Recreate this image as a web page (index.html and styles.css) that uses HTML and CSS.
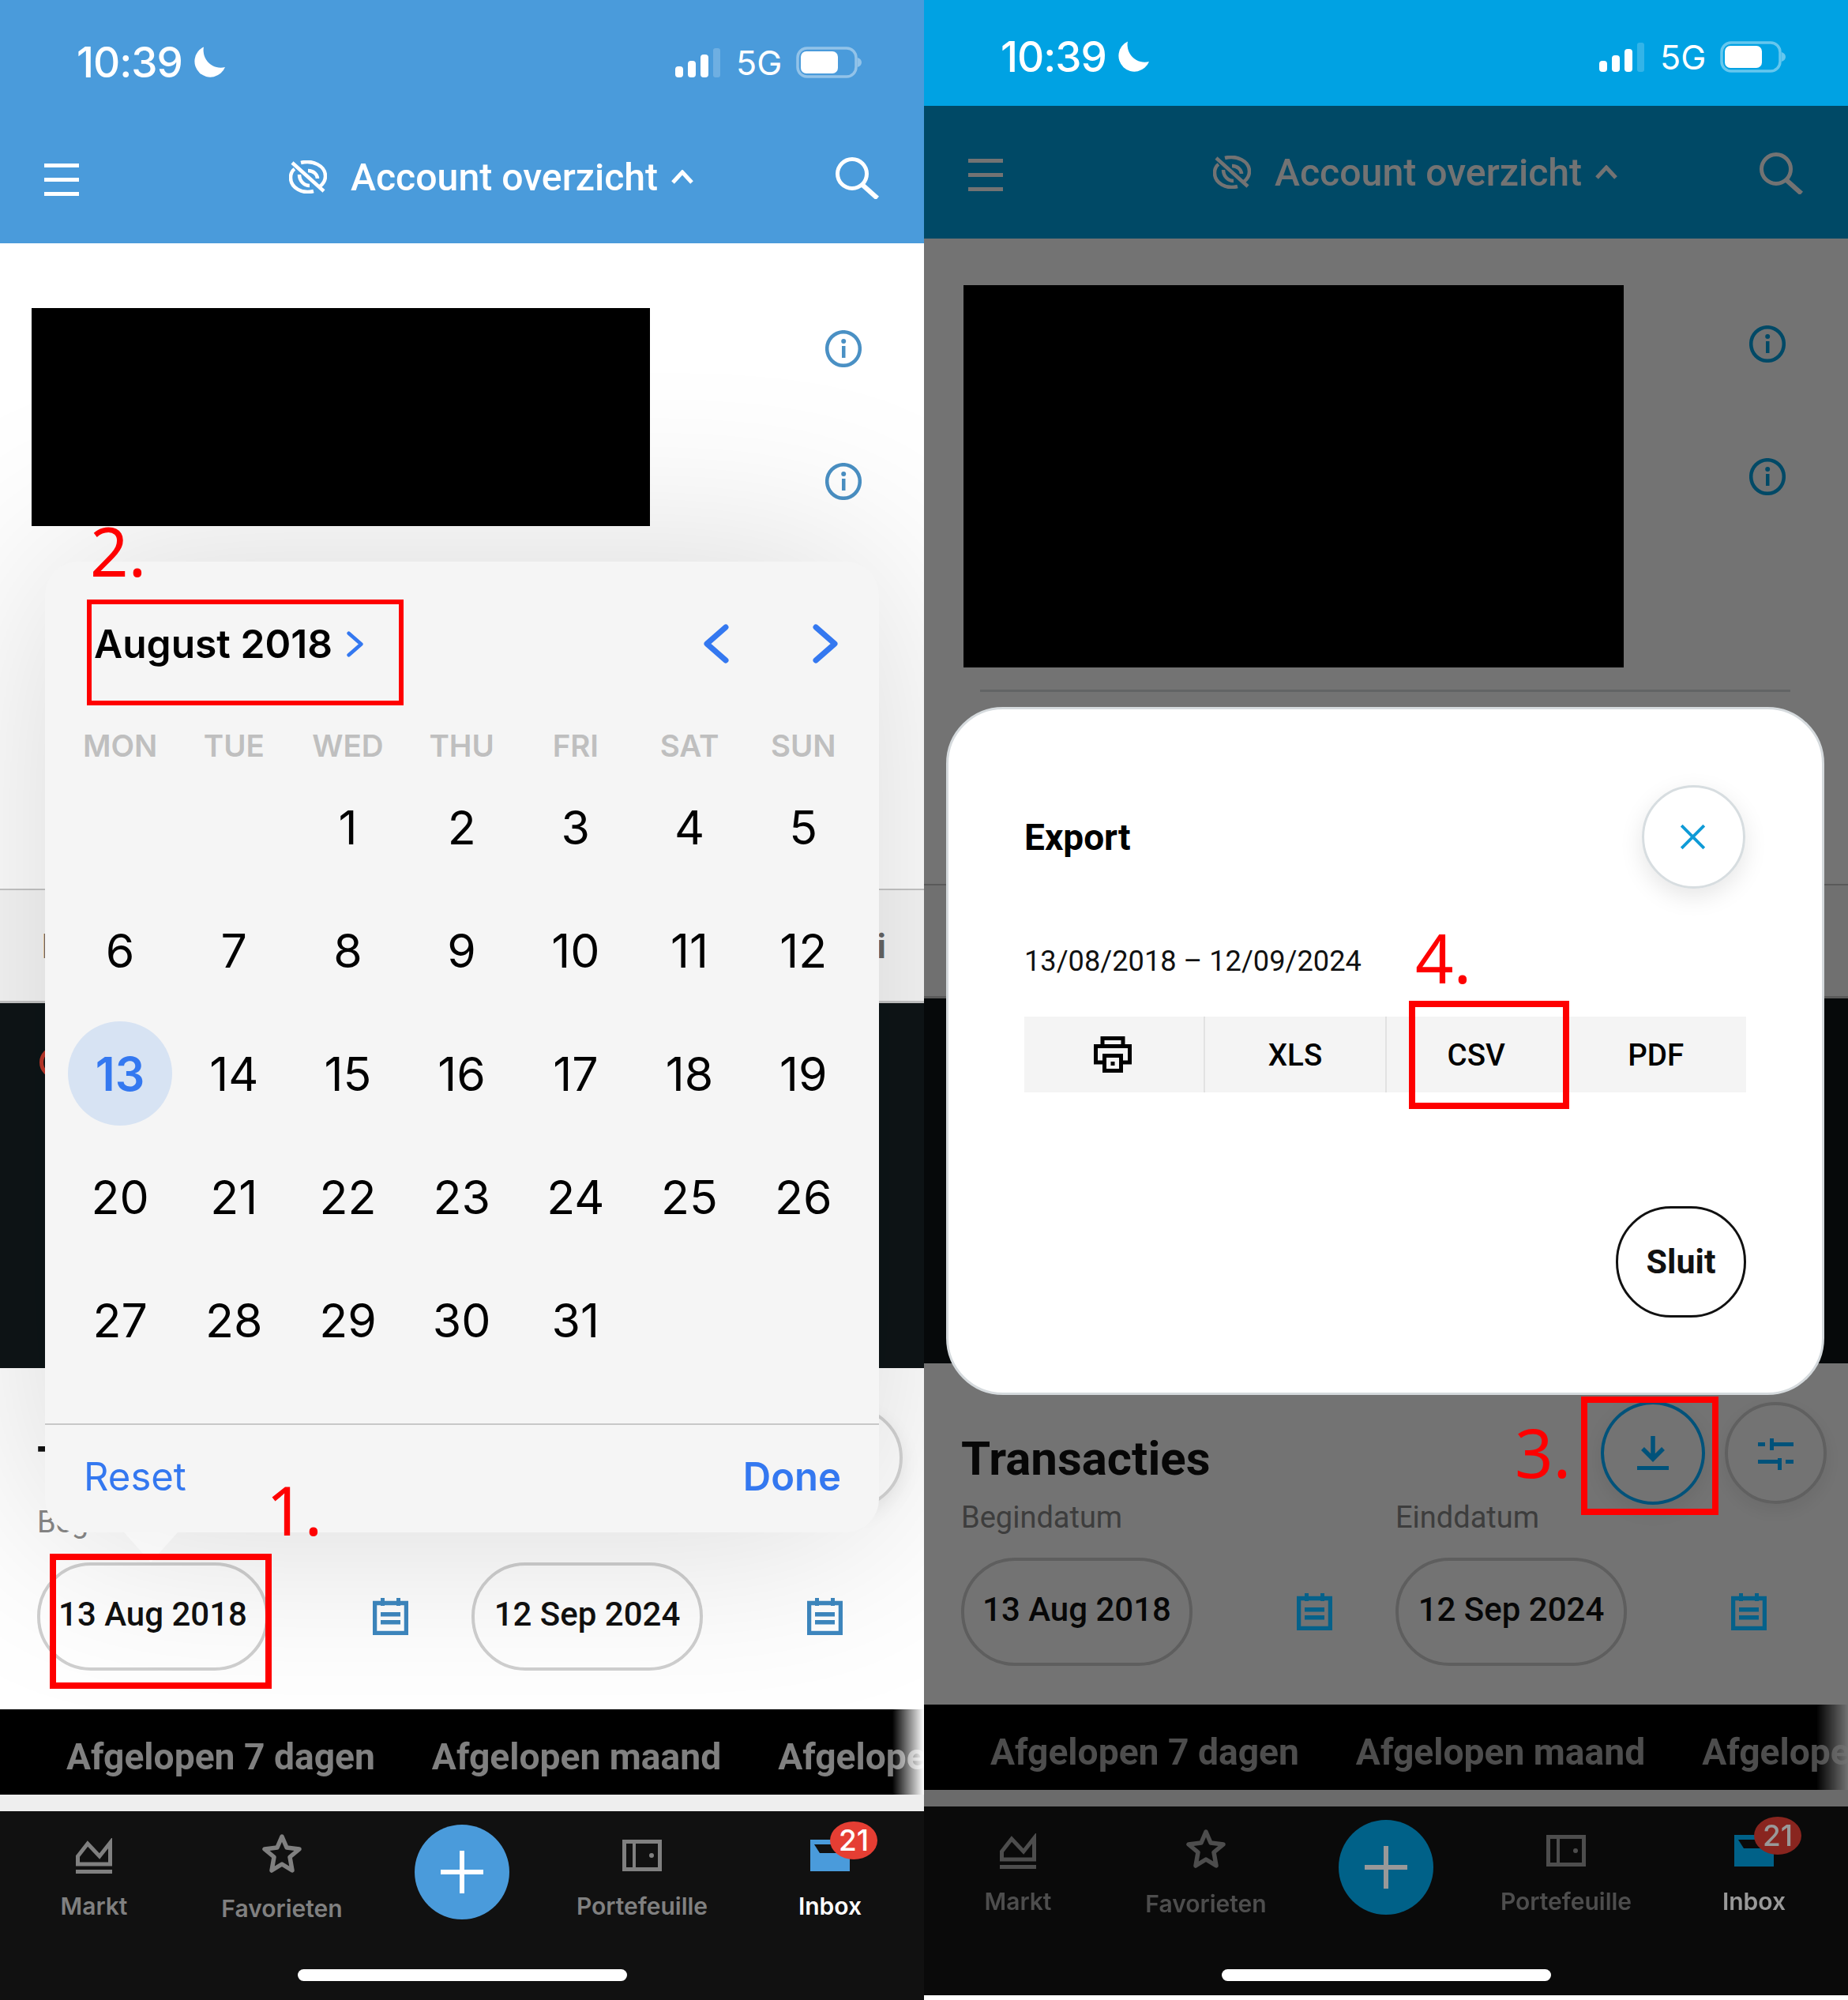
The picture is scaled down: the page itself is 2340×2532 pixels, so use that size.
FILE: index.html
```html
<!DOCTYPE html>
<html lang="nl">
<head>
  <meta charset="UTF-8">
  <title>Account overzicht – export</title>
  <link rel="stylesheet" href="styles.css">
</head>
<body>
  <svg class="defs" width="0" height="0">
    <symbol id="i-moon" viewBox="0 0 40 40"><path d="M13 0.500A20 20 0 1 0 40 26 22 22 0 0 1 13 0.500Z" fill="currentColor"/></symbol>
    <symbol id="i-signal" viewBox="0 0 57 37">
      <rect x="0" y="23" width="10" height="14" rx="4" fill="currentColor"/>
      <rect x="16" y="16" width="10" height="21" rx="4" fill="currentColor"/>
      <rect x="32" y="8" width="10" height="29" rx="4" fill="currentColor"/>
      <rect x="48" y="0" width="9" height="37" rx="3" fill="currentColor" opacity=".2"/>
    </symbol>
    <symbol id="i-battery" viewBox="0 0 83 40">
      <rect x="2" y="2" width="74" height="36" rx="12" fill="none" stroke="currentColor" stroke-width="3.500" opacity=".4"/>
      <rect x="6" y="6" width="47" height="28" rx="7" fill="currentColor"/>
      <path d="M78 14c3 1 5 3 5 6s-2 5-5 6Z" fill="currentColor" opacity=".4"/>
    </symbol>
    <symbol id="i-eye" viewBox="0 0 48 42">
      <g fill="none" stroke="currentColor" stroke-width="4.500">
        <path d="M4 3 44 39"/>
        <path d="M15 3C30-1 46 7 46 20c0 6-3 10-7 13"/>
        <path d="M31 39C17 43 2 35 2 22c0-5 2-9 5-11"/>
        <path d="M24 13c7 0 12 5 12 10"/>
        <path d="M13 18c0 8 6 14 13 14"/>
      </g>
    </symbol>
    <symbol id="i-up" viewBox="0 0 28 18"><path d="M2 16 14 3l12 13" fill="none" stroke="currentColor" stroke-width="5"/></symbol>
    <symbol id="i-search" viewBox="0 0 55 53">
      <circle cx="21" cy="21" r="18.500" fill="none" stroke="currentColor" stroke-width="5"/>
      <path d="M34 35 53 52" fill="none" stroke="currentColor" stroke-width="6"/>
    </symbol>
    <symbol id="i-info" viewBox="0 0 46 47">
      <ellipse cx="23" cy="23.500" rx="20.800" ry="21.300" fill="none" stroke="currentColor" stroke-width="4.500"/>
      <rect x="21" y="20" width="4.500" height="15" fill="currentColor"/>
      <circle cx="23.200" cy="14" r="3" fill="currentColor"/>
    </symbol>
    <symbol id="i-cal" viewBox="0 0 45 47">
      <rect x="2.500" y="6.500" width="40" height="38" fill="none" stroke="currentColor" stroke-width="5.500"/>
      <rect x="10" y="0" width="5" height="10" fill="currentColor"/>
      <rect x="30" y="0" width="5" height="10" fill="currentColor"/>
      <rect x="10" y="18" width="25" height="5.500" fill="currentColor"/>
      <rect x="10" y="28" width="25" height="5.500" fill="currentColor"/>
    </symbol>
    <symbol id="i-download" viewBox="0 0 40 43">
      <path d="M20 0V28M7 16 20 29 33 16" fill="none" stroke="currentColor" stroke-width="5.500"/>
      <rect x="0" y="38" width="40" height="5" fill="currentColor"/>
    </symbol>
    <symbol id="i-sliders" viewBox="0 0 45 40">
      <rect x="0" y="5" width="9" height="5" fill="currentColor"/>
      <rect x="15" y="0" width="5" height="15" fill="currentColor"/>
      <rect x="20" y="5" width="25" height="5" fill="currentColor"/>
      <rect x="0" y="27" width="25" height="5" fill="currentColor"/>
      <rect x="25" y="25" width="5" height="15" fill="currentColor"/>
      <rect x="35" y="27" width="10" height="5" fill="currentColor"/>
    </symbol>
    <symbol id="i-markt" viewBox="0 0 46 45">
      <path d="M2.500 33V23L15 7 30 23 43.500 6V33Z" fill="none" stroke="currentColor" stroke-width="5"/>
      <rect x="0" y="40" width="46" height="5" fill="currentColor"/>
    </symbol>
    <symbol id="i-star" viewBox="0 0 50 50">
      <path d="M25 4 31 18 47 20 35 30 38 47 25 39 12 47 15 30 3 20 19 18Z" fill="none" stroke="currentColor" stroke-width="5.500" stroke-linejoin="round"/>
    </symbol>
    <symbol id="i-folio" viewBox="0 0 50 40">
      <rect x="2.500" y="2.500" width="45" height="35" fill="none" stroke="currentColor" stroke-width="5"/>
      <rect x="13" y="2" width="4" height="36" fill="currentColor"/>
      <circle cx="37" cy="20" r="3" fill="currentColor"/>
    </symbol>
    <symbol id="i-inbox" viewBox="0 0 50 40">
      <rect width="50" height="40" fill="currentColor"/>
      <path d="M5 6H42V17H12Z" fill="#111"/>
    </symbol>
    <symbol id="i-print" viewBox="0 0 48 46">
      <path d="M11 12V2.500H37V12M11 33H2.500V12.500H45.500V33H37" fill="none" stroke="currentColor" stroke-width="5"/>
      <rect x="13.500" y="24.500" width="21" height="19" fill="none" stroke="currentColor" stroke-width="5"/>
      <rect x="21.500" y="32" width="5" height="5" fill="currentColor"/>
    </symbol>
    <symbol id="i-close" viewBox="0 0 30 30"><path d="M2 2 28 28M28 2 2 28" fill="none" stroke="currentColor" stroke-width="3.500"/></symbol>
    <symbol id="i-next" viewBox="0 0 32 50"><path d="M4 4 28 25 4 46" fill="none" stroke="currentColor" stroke-width="7" stroke-linecap="round" stroke-linejoin="round"/></symbol>
    <symbol id="i-prev" viewBox="0 0 32 50"><path d="M28 4 4 25 28 46" fill="none" stroke="currentColor" stroke-width="7" stroke-linecap="round" stroke-linejoin="round"/></symbol>
  </svg>

  <div class="page">

    <!-- step 1 and 2: choosing the start date -->
    <section class="phone">
      <div class="status">
        <span class="clock">10:39</span>
        <svg class="moon"><use href="#i-moon"/></svg>
        <svg class="signal"><use href="#i-signal"/></svg>
        <span class="net">5G</span>
        <svg class="battery"><use href="#i-battery"/></svg>
      </div>
      <header class="appbar">
        <div class="burger"><i></i><i></i><i></i></div>
        <svg class="eye"><use href="#i-eye"/></svg>
        <h1>Account overzicht</h1>
        <svg class="up"><use href="#i-up"/></svg>
        <svg class="search"><use href="#i-search"/></svg>
      </header>
      <div class="summary">
        <div class="redact"></div>
        <svg class="info"><use href="#i-info"/></svg>
        <svg class="info"><use href="#i-info"/></svg>
        <div class="rule"></div>
      </div>
      <div class="subrow"><span>I</span><span>i</span></div>
      <div class="banner"><div class="banner-dot"></div></div>
      <div class="trans">
        <div class="trans-head">
          <h2>Transacties</h2>
          <button class="round round-on"><svg class="dl"><use href="#i-download"/></svg></button>
          <button class="round"><svg class="sl"><use href="#i-sliders"/></svg></button>
        </div>
        <div class="dates">
          <div class="date-col">
            <label>Begindatum</label>
            <div class="date-row"><div class="pill">13 Aug 2018</div><svg class="cal"><use href="#i-cal"/></svg></div>
          </div>
          <div class="date-col">
            <label>Einddatum</label>
            <div class="date-row"><div class="pill">12 Sep 2024</div><svg class="cal"><use href="#i-cal"/></svg></div>
          </div>
        </div>
      </div>
      <div class="tabs"><span>Afgelopen 7 dagen</span><span>Afgelopen maand</span><span>Afgelope</span></div>
      <div class="gap"></div>
      <nav class="nav">
        <a class="nav-item"><svg class="n-markt"><use href="#i-markt"/></svg>Markt</a>
        <a class="nav-item n-fav"><svg class="n-star"><use href="#i-star"/></svg>Favorieten</a>
        <a class="fab"><i></i><i></i></a>
        <a class="nav-item"><svg class="n-box"><use href="#i-folio"/></svg>Portefeuille</a>
        <a class="nav-item n-on"><svg class="n-box n-inbox"><use href="#i-inbox"/></svg>Inbox<b class="badge">21</b></a>
      </nav>
      <div class="home"></div>

      <div class="picker">
        <div class="picker-head">
          <strong>August 2018</strong>
          <svg class="chev-s"><use href="#i-next"/></svg>
          <svg class="chev chev-prev"><use href="#i-prev"/></svg>
          <svg class="chev chev-next"><use href="#i-next"/></svg>
        </div>
        <div class="week">
          <span>MON</span><span>TUE</span><span>WED</span><span>THU</span><span>FRI</span><span>SAT</span><span>SUN</span>
        </div>
        <div class="days">
          <span></span><span></span><span>1</span><span>2</span><span>3</span><span>4</span><span>5</span>
          <span>6</span><span>7</span><span>8</span><span>9</span><span>10</span><span>11</span><span>12</span>
          <span class="today">13</span><span>14</span><span>15</span><span>16</span><span>17</span><span>18</span><span>19</span>
          <span>20</span><span>21</span><span>22</span><span>23</span><span>24</span><span>25</span><span>26</span>
          <span>27</span><span>28</span><span>29</span><span>30</span><span>31</span><span></span><span></span>
        </div>
        <div class="picker-foot"><a>Reset</a><a class="done">Done</a></div>
      </div>
    </section>

    <!-- step 3 and 4: the export dialog -->
    <section class="phone phone-dim">
      <div class="status">
        <span class="clock">10:39</span>
        <svg class="moon"><use href="#i-moon"/></svg>
        <svg class="signal"><use href="#i-signal"/></svg>
        <span class="net">5G</span>
        <svg class="battery"><use href="#i-battery"/></svg>
      </div>
      <header class="appbar">
        <div class="burger"><i></i><i></i><i></i></div>
        <svg class="eye"><use href="#i-eye"/></svg>
        <h1>Account overzicht</h1>
        <svg class="up"><use href="#i-up"/></svg>
        <svg class="search"><use href="#i-search"/></svg>
      </header>
      <div class="summary">
        <div class="redact"></div>
        <svg class="info"><use href="#i-info"/></svg>
        <svg class="info"><use href="#i-info"/></svg>
        <div class="rule"></div>
      </div>
      <div class="subrow"><span>I</span><span>i</span></div>
      <div class="banner"></div>
      <div class="trans">
        <div class="trans-head">
          <h2>Transacties</h2>
          <button class="round round-on"><svg class="dl"><use href="#i-download"/></svg></button>
          <button class="round"><svg class="sl"><use href="#i-sliders"/></svg></button>
        </div>
        <div class="dates">
          <div class="date-col">
            <label>Begindatum</label>
            <div class="date-row"><div class="pill">13 Aug 2018</div><svg class="cal"><use href="#i-cal"/></svg></div>
          </div>
          <div class="date-col">
            <label>Einddatum</label>
            <div class="date-row"><div class="pill">12 Sep 2024</div><svg class="cal"><use href="#i-cal"/></svg></div>
          </div>
        </div>
      </div>
      <div class="tabs"><span>Afgelopen 7 dagen</span><span>Afgelopen maand</span><span>Afgelope</span></div>
      <div class="gap"></div>
      <nav class="nav">
        <a class="nav-item"><svg class="n-markt"><use href="#i-markt"/></svg>Markt</a>
        <a class="nav-item n-fav"><svg class="n-star"><use href="#i-star"/></svg>Favorieten</a>
        <a class="fab"><i></i><i></i></a>
        <a class="nav-item"><svg class="n-box"><use href="#i-folio"/></svg>Portefeuille</a>
        <a class="nav-item n-on"><svg class="n-box n-inbox"><use href="#i-inbox"/></svg>Inbox<b class="badge">21</b></a>
      </nav>

      <div class="scrim"></div>
      <div class="home"></div>

      <div class="dialog">
        <div class="dialog-head">
          <h3>Export</h3>
          <button class="close"><svg><use href="#i-close"/></svg></button>
        </div>
        <p class="range">13/08/2018 – 12/09/2024</p>
        <div class="formats">
          <a><svg class="print"><use href="#i-print"/></svg></a>
          <a>XLS</a>
          <a>CSV</a>
          <a>PDF</a>
        </div>
        <button class="sluit">Sluit</button>
      </div>
    </section>

    <!-- red tutorial marks drawn on top of the screenshots -->
    <div class="mark mark-1"></div>
    <div class="mark mark-2"></div>
    <div class="mark mark-3"></div>
    <div class="mark mark-4"></div>
    <span class="step step-1">1.</span>
    <span class="step step-2">2.</span>
    <span class="step step-3">3.</span>
    <span class="step step-4">4.</span>
  </div>
</body>
</html>
```

FILE: styles.css
```css
* { margin:0; padding:0; box-sizing:border-box; }
body { background:#fff; font-family:Inter,"Liberation Sans",sans-serif; }
.defs { position:absolute; }
button { font:inherit; background:none; cursor:pointer; }
svg { display:block; flex:none; }

.page { position:relative; width:2340px; height:2532px; display:grid; grid-template-columns:1170px 1170px; align-items:start; }

.phone { --brand:#4a9bdb; --accent:#4a90c4; --cal:#3e88c0; position:relative; height:2532px; overflow:hidden; background:#fff; }
.phone-dim { --brand:#00a2e3; --accent:#00a2e3; --cal:#00a2e3; height:2526px; }

/* status bar */
.status { height:140px; padding:18px 79px 0 97px; background:var(--brand); color:#fff; display:flex; align-items:center; }
.phone-dim .status { height:134px; padding-top:10px; }
.clock { font-size:53px; font-weight:500; letter-spacing:-1px; width:148px; }
.moon { width:40px; height:40px; }
.signal { width:57px; height:37px; margin-left:auto; color:#fff; }
.net { font-size:43px; width:52px; margin:0 24px 0 20px; }
.battery { width:83px; height:40px; }

/* app bar */
.appbar { height:168px; padding-right:57px; background:var(--brand); color:#fff; display:flex; align-items:center; }
.burger { width:44px; margin:6px 266px 0 56px; display:flex; flex-direction:column; gap:13px; }
.burger i { height:5px; background:currentColor; }
.eye { width:48px; height:42px; }
.appbar h1 { font:500 48.200px Roboto,sans-serif; margin-left:30px; }
.up { width:28px; height:18px; margin-left:17px; }
.search { width:55px; height:53px; margin:3px 0 0 auto; }

/* summary */
.summary { position:relative; height:817px; padding:110px 79px 0 0; display:flex; flex-direction:column; align-items:flex-end; gap:121px; }
.redact { position:absolute; left:40px; top:82px; width:783px; height:276px; background:#000; }
.phone-dim .redact { left:50px; top:59px; width:836px; height:484px; }
.info { width:46px; height:47px; color:var(--accent); }
.rule { position:absolute; left:71px; right:73px; top:571px; height:3px; background:#d9dde0; }

.subrow { height:145px; padding:0 48px 0 53px; background:#f8f8f8; border-top:2px solid #c8c8c8; border-bottom:3px solid #c8c8c8; display:flex; justify-content:space-between; align-items:center; font-size:42px; font-weight:700; color:#666; }
.banner { height:462px; padding:55px 0 0 50px; background:#0e1517; }
.banner-dot { width:40px; height:40px; border:5px solid #c0392b; border-radius:50%; }

/* transactions */
.trans { height:432px; padding:48px 27px 0 47px; background:#fff; }
.trans-head { display:flex; align-items:center; gap:25px; height:130px; }
.trans-head h2 { font:700 60px Roboto,sans-serif; color:#111; margin-right:auto; padding-top:14px; }
.round { width:129px; height:129px; border-radius:50%; border:4px solid #d4d4d4; color:var(--cal); display:flex; align-items:center; justify-content:center; box-shadow:0 8px 24px rgba(0,0,0,.08); }
.round-on { width:132px; height:131px; border-color:var(--cal); }
.dl { width:40px; height:43px; }
.sl { width:45px; height:40px; margin-top:3px; }
.phone-dim .round-on, .phone-dim .sl { position:relative; z-index:1; color:#00527a; border-color:#00527a; }
.dates { display:flex; gap:80px; margin-top:-6px; }
.date-col { width:470px; }
.date-col label { display:block; font:400 38px/46px Roboto,sans-serif; color:#888; }
.date-row { display:flex; align-items:center; justify-content:space-between; margin-top:28px; }
.pill { width:293px; height:137px; padding-bottom:6px; border:4px solid #d0d0d0; border-radius:68px; display:flex; align-items:center; justify-content:center; font:500 42px Roboto,sans-serif; color:#111; }
.cal { width:45px; height:47px; color:var(--cal); }
.phone-dim .cal { position:relative; z-index:1; color:#05618a; }

/* tabs and bottom nav */
.tabs { height:108px; padding:12px 0 0 84px; background:#000; display:flex; align-items:center; gap:72px; white-space:nowrap; overflow:hidden; font:700 46.200px Roboto,sans-serif; color:#808080; mask-image:linear-gradient(to right,#000 1130px,transparent 1170px); }
.gap { height:21px; background:#eee; }
.nav { height:239px; background:#111; display:grid; grid-template-columns:238px 238px 218px 238px 238px; justify-items:center; align-items:start; }
.nav-item { position:relative; padding-top:34px; display:flex; flex-direction:column; align-items:center; font-size:30px; font-weight:600; line-height:38px; color:#808080; }
.n-markt { width:46px; height:45px; margin-bottom:22px; }
.n-fav { padding-top:28px; }
.n-star { width:50px; height:50px; margin-bottom:26px; }
.n-box { width:50px; height:40px; margin:2px 0 25px; }
.n-on { color:#fff; }
.n-inbox { color:var(--brand); }
.badge { position:absolute; left:50%; top:13px; margin-left:0; width:60px; height:48px; border-radius:50%; background:#e53e33; color:#fff; font-weight:500; font-size:37px; line-height:48px; text-align:center; }
.fab { position:relative; width:120px; height:120px; margin-top:17px; border-radius:50%; background:var(--brand); }
.fab i { position:absolute; left:33px; top:57px; width:54px; height:6px; background:#fff; }
.fab i + i { left:57px; top:33px; width:6px; height:54px; }

.home { position:absolute; left:377px; bottom:24px; width:417px; height:15px; border-radius:8px; background:#fff; }

/* date picker popover */
.picker { position:absolute; left:57px; top:711px; width:1056px; height:1229px; display:flex; flex-direction:column; background:#f5f5f5; border-radius:42px; box-shadow:0 0 500px rgba(0,0,0,.16); }
.picker::after { content:""; position:absolute; left:100px; top:100%; width:68px; height:38px; background:rgba(255,255,255,.45); clip-path:polygon(0 0,100% 0,50% 100%); }
.picker-head { height:208px; padding:0 52px 0 62px; display:flex; align-items:center; }
.picker-head strong { font-size:49.700px; font-weight:600; color:#000; }
.chev-s { width:21px; height:33px; margin-left:18px; color:#3478f0; }
.chev { width:32px; height:50px; color:#3478f0; }
.chev-prev { margin-left:auto; }
.chev-next { margin-left:106px; }
.week, .days { display:grid; grid-template-columns:repeat(7,144.200px); margin-left:23px; text-align:center; }
.week { height:50px; align-items:center; font-size:38.500px; font-weight:600; color:#bfbfbf; }
.days { grid-auto-rows:156px; align-items:center; justify-items:center; font-size:59px; color:#000; }
.today { width:132px; height:132px; border-radius:50%; background:#d7e3f3; color:#3478f0; font-weight:600; display:flex; align-items:center; justify-content:center; }
.picker-foot { margin-top:auto; height:138px; padding:0 48px 6px 49px; border-top:2px solid #c8c8c8; display:flex; align-items:center; justify-content:space-between; font-size:49px; color:#3478f0; }
.done { font-weight:600; }

/* dim layer and export dialog */
.scrim { position:absolute; left:0; right:0; top:134px; bottom:0; background:rgba(0,0,0,.55); }
.phone-dim .tabs, .phone-dim .nav { position:relative; z-index:1; filter:brightness(.6); }
.phone-dim .home { bottom:18px; z-index:2; }
.dialog { position:absolute; z-index:3; left:28px; top:895px; width:1112px; height:871px; padding:96px 96px 0; background:#fff; border:3px solid #d5dadd; border-radius:72px; display:flex; flex-direction:column; }
.dialog-head { display:flex; align-items:center; justify-content:space-between; }
.dialog-head h3 { font:700 46px Roboto,sans-serif; color:#000; }
.close { width:131px; height:131px; margin-right:1px; border-radius:50%; border:3px solid #d7dde0; color:#0f9bd7; display:flex; align-items:center; justify-content:center; box-shadow:0 10px 30px rgba(0,0,0,.1); }
.close svg { width:33px; height:33px; margin-right:3px; }
.range { margin-top:69px; font:400 36.200px/46px Roboto,sans-serif; color:#111; }
.formats { margin-top:47px; height:96px; background:#f4f4f4; display:grid; grid-template-columns:227px 230px 228.500px 228.500px; }
.formats a { display:flex; align-items:center; justify-content:center; border-left:2px solid #e2e2e2; font:500 38.500px Roboto,sans-serif; color:#000; }
.formats a:first-child, .formats a:last-child { border-left:0; }
.print { width:48px; height:46px; margin-left:-3px; }
.sluit { align-self:flex-end; margin-top:144px; width:165px; height:141px; padding-bottom:2px; border:3px solid #111; border-radius:70px; font:700 43px Roboto,sans-serif; color:#111; }

/* tutorial marks */
.mark { position:absolute; z-index:5; border:8px solid #fe0000; }
.mark-1 { left:63px; top:1967px; width:281px; height:171px; }
.mark-2 { left:110px; top:759px; width:401px; height:134px; border-width:6px; }
.mark-3 { left:2002px; top:1768px; width:174px; height:150px; }
.mark-4 { left:1784px; top:1267px; width:203px; height:137px; }
.step { position:absolute; z-index:5; font:400 85px/1 "Noto Sans",sans-serif; color:#fe0000; }
.step-1 { left:337px; top:1869px; }
.step-2 { left:114px; top:655px; }
.step-3 { left:1918px; top:1796px; }
.step-4 { left:1792px; top:1170px; }
```
